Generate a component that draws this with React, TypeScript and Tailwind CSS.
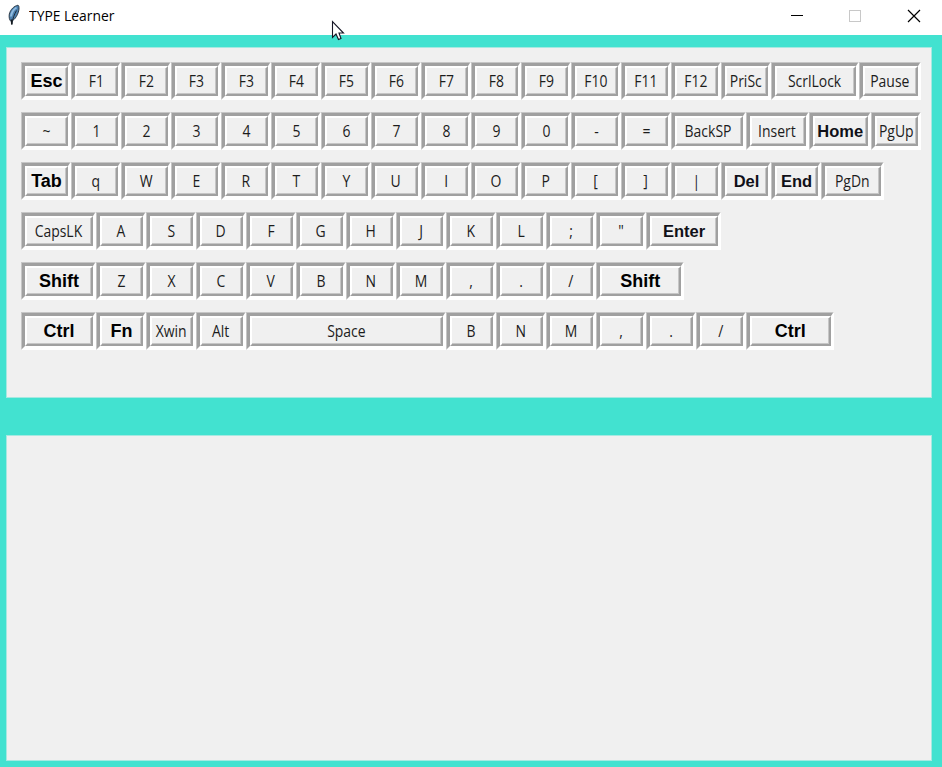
type KeyDef = { t: string; w?: string; b?: "lg" | "md" };

const k = (s: string): KeyDef[] => s.split(" ").map((t) => ({ t }));

const W62 = "w-[62.5px]";
const W75 = "w-[75px]";
const W87 = "w-[87.5px]";

const rows: KeyDef[][] = [
  [
    { t: "Esc", b: "lg" },
    ...k("F1 F2 F3 F3 F4 F5 F6 F7 F8 F9 F10 F11 F12 PriSc"),
    { t: "ScrlLock", w: W87 },
    { t: "Pause", w: W62 },
  ],
  [
    ...k("~ 1 2 3 4 5 6 7 8 9 0 - ="),
    { t: "BackSP", w: W75 },
    { t: "Insert", w: W62 },
    { t: "Home", w: W62, b: "md" },
    { t: "PgUp" },
  ],
  [
    { t: "Tab", b: "lg" },
    ...k("q W E R T Y U I O P [ ] |"),
    { t: "Del", b: "md" },
    { t: "End", b: "md" },
    { t: "PgDn", w: W62 },
  ],
  [{ t: "CapsLK", w: W75 }, ...k('A S D F G H J K L ; "'), { t: "Enter", w: W75, b: "md" }],
  [{ t: "Shift", w: W75, b: "lg" }, ...k("Z X C V B N M , . /"), { t: "Shift", w: W87, b: "lg" }],
  [
    { t: "Ctrl", w: W75, b: "lg" },
    { t: "Fn", b: "lg" },
    ...k("Xwin Alt"),
    { t: "Space", w: "w-[200px]" },
    ...k("B N M , . /"),
    { t: "Ctrl", w: W87, b: "lg" },
  ],
];

const fonts = {
  lg: "font-['Liberation_Sans',Arial,sans-serif] font-bold text-[18px] text-black pl-px",
  md: "font-['Liberation_Sans',Arial,sans-serif] font-bold text-[16.5px] text-[#101018] pt-[2px] pl-px",
  normal: "font-['Open_Sans','Noto_Sans',sans-serif] text-[15.5px] text-[#1c1c1c] scale-x-[0.9] pt-[2px]",
};

function Key({ t, w = "w-[50px]", b }: KeyDef) {
  return (
    <div className={`${w} h-[38px] shrink-0 border border-t-[#c6c6c6] border-l-[#c6c6c6] border-r-white border-b-white`}>
      <div className="h-full border-[3px] border-r-2 border-t-[#a0a0a0] border-l-[#a0a0a0] border-r-white border-b-white">
        <div className="h-full border-2 border-t-white border-l-white border-r-[#a0a0a0] border-b-[#a0a0a0]">
          <div className="flex h-full items-center justify-center border-r border-b border-[#c6c6c6] bg-[#f0f0f0]">
            <span className={`whitespace-nowrap leading-none ${fonts[b ?? "normal"]}`}>{t}</span>
          </div>
        </div>
      </div>
    </div>
  );
}

function Feather() {
  return (
    <svg className="ml-[7px] h-[22px] w-[13px]" viewBox="0 0 13 22">
      <path d="M11 1.200C7 2 3.400 5.500 2.300 10C1.800 13 2.300 16 4 17.500C8 16 11.500 10 12 5C12.100 3 11.900 1.600 11 1.200Z" fill="#4b7fae" stroke="#22303c" strokeWidth="0.900" />
      <path d="M9.500 3.500C6.500 5.500 4.500 8.500 4 12.500" stroke="#8fbbe0" strokeWidth="2" fill="none" />
      <path d="M9.500 6.500C7.500 10 5.800 14 4.800 20.500" stroke="#1c2a38" strokeWidth="1" fill="none" />
      <path d="M4.600 15.500L4.800 20.500" stroke="#141a20" strokeWidth="1.600" fill="none" />
    </svg>
  );
}

export default function App() {
  return (
    <div className="relative flex h-[767px] w-[942px] flex-col overflow-hidden bg-[#42e2d0]">
      <header className="flex h-[35px] shrink-0 bg-white">
        <div className="flex h-[30px] items-center">
          <Feather />
          <span className="ml-[9px] origin-left scale-x-[0.925] whitespace-nowrap font-['Open_Sans','Noto_Sans',sans-serif] text-[15px] leading-none text-black">
            TYPE Learner
          </span>
        </div>
        <svg className="ml-auto h-[35px] w-[160px]" viewBox="0 0 160 35" fill="none">
          <path d="M9 15.500H21" stroke="#000" />
          <rect x="67.500" y="10.500" width="11" height="11" stroke="#c8c8c8" />
          <path d="M126 10L138 22M138 10L126 22" stroke="#000" strokeWidth="1.200" />
        </svg>
      </header>
      <main className="flex flex-col pt-3 pl-[6px]">
        <section className="flex h-[351px] w-[926px] flex-col gap-3 border border-[#a6e9e1] bg-[#f0f0f0] pt-[14px] pl-[14px]">
          {rows.map((row, i) => (
            <div key={i} className="flex">
              {row.map((key, j) => (
                <Key key={j} {...key} />
              ))}
            </div>
          ))}
        </section>
        <section className="mt-[37px] h-[326px] w-[926px] border border-[#a6e9e1] bg-[#f0f0f0]" />
      </main>
      <svg className="absolute top-[20px] left-[331px] h-[22px] w-[15px]" viewBox="0 0 15 22">
        <path d="M1.500 1.500V17.500L5 14L7.500 19.500L10 18.500L8 13H12.500Z" fill="#fff" stroke="#151525" strokeWidth="1.100" />
      </svg>
    </div>
  );
}
